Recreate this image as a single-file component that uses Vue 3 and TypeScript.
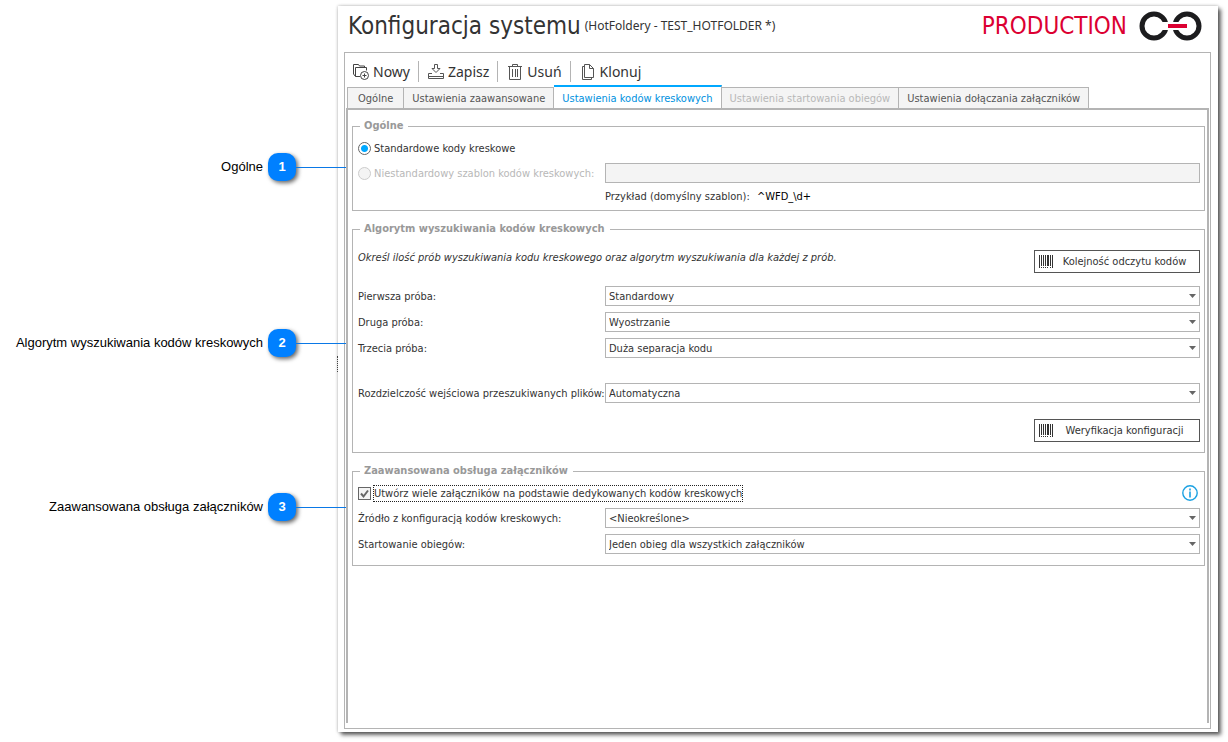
<script setup lang="ts">
import { ref } from 'vue'

interface Callout { id: number; label: string }
interface Tab { label: string; disabled?: boolean }
interface Attempt { id: string; label: string; value: string }

const callouts: Callout[] = [
  { id: 1, label: 'Ogólne' },
  { id: 2, label: 'Algorytm wyszukiwania kodów kreskowych' },
  { id: 3, label: 'Zaawansowana obsługa załączników' },
]

const tabs: Tab[] = [
  { label: 'Ogólne' },
  { label: 'Ustawienia zaawansowane' },
  { label: 'Ustawienia kodów kreskowych' },
  { label: 'Ustawienia startowania obiegów', disabled: true },
  { label: 'Ustawienia dołączania załączników' },
]
const activeTab = ref(2)

const algorithms: string[] = ['Standardowy', 'Wyostrzanie', 'Duża separacja kodu']
const attempts = ref<Attempt[]>([
  { id: 'first', label: 'Pierwsza próba:', value: 'Standardowy' },
  { id: 'second', label: 'Druga próba:', value: 'Wyostrzanie' },
  { id: 'third', label: 'Trzecia próba:', value: 'Duża separacja kodu' },
])

const mode = ref('standard')
const multiple = ref(true)
</script>

<template>
  <div class="page">
    <aside class="callouts">
      <div v-for="c in callouts" :key="c.id" class="callout">
        <span class="callout-label">{{ c.label }}</span>
        <span class="badge">{{ c.id }}</span>
        <span class="lead"></span>
      </div>
    </aside>

    <main class="window">
      <span class="grip"></span>
      <header class="head">
        <h1>Konfiguracja systemu</h1>
        <span class="sub">(HotFoldery - TEST_HOTFOLDER *)</span>
        <span class="env">PRODUCTION</span>
        <svg class="logo" width="64" height="30" viewBox="0 0 64 30">
          <circle cx="15" cy="15" r="12" fill="none" stroke="#1c1c1e" stroke-width="5" />
          <circle cx="48" cy="15" r="12" fill="none" stroke="#1c1c1e" stroke-width="5" />
          <path d="M22 11h19v8H22z" fill="#fff" />
          <path d="M30 0h3v30h-3z" fill="#fff" />
          <path d="M29 13h19v4H29z" fill="#dc0032" />
        </svg>
      </header>

      <div class="panel">
        <nav class="toolbar">
          <button type="button" class="tool">
            <svg width="18" height="18" viewBox="0 0 18 18" fill="none" stroke="#444">
              <path d="M8 13.500H3.500V4.500h11V7.500M3.500 13.500l-2-2.500V1.500h5l1 1.500h5v1.500" />
              <circle cx="12.500" cy="12.500" r="4" />
              <path d="M10.500 12.500h4M12.500 10.500v4" />
            </svg>
            Nowy
          </button>
          <button type="button" class="tool">
            <svg width="18" height="18" viewBox="0 0 18 18" fill="none" stroke="#555">
              <path d="M7.500 1.500h3v4h2.500L9 9.500 5 5.500h2.500zM5 10.500H1.500v5h15v-5H13M1.500 13.500h15" />
            </svg>
            Zapisz
          </button>
          <button type="button" class="tool">
            <svg width="18" height="18" viewBox="0 0 18 18" fill="none" stroke="#555">
              <path d="M2 3.500h14M6.500 3V1.500h5V3M3.500 3.500v13h11v-13M6.500 6v8M9.500 6v8M11.500 6v8" />
            </svg>
            Usuń
          </button>
          <button type="button" class="tool">
            <svg width="18" height="18" viewBox="0 0 18 18" fill="none" stroke="#555">
              <path d="M5.500 1.500h5l4 4v9h-9zM10.500 1.500v4h4M5.500 3.500h-2v13h9v-2" />
            </svg>
            Klonuj
          </button>
        </nav>

        <div class="tabs" role="tablist">
          <button
            v-for="(t, i) in tabs"
            :key="t.label"
            type="button"
            role="tab"
            class="tab"
            :class="{ active: i === activeTab }"
            :aria-selected="i === activeTab"
            :disabled="t.disabled"
            @click="activeTab = i"
          >{{ t.label }}</button>
        </div>

        <div class="sheet">
          <fieldset class="general">
            <legend>Ogólne</legend>
            <label class="choice">
              <input v-model="mode" type="radio" name="mode" value="standard">
              <span class="choice-text">Standardowe kody kreskowe</span>
            </label>
            <div class="row">
              <label class="choice off">
                <input v-model="mode" type="radio" name="mode" value="custom" disabled>
                <span class="choice-text">Niestandardowy szablon kodów kreskowych:</span>
              </label>
              <input class="box" type="text" aria-label="Niestandardowy szablon kodów kreskowych" disabled>
            </div>
            <div class="row">
              <span></span>
              <p class="example">Przykład (domyślny szablon): <span class="pattern">^WFD_\d+</span></p>
            </div>
          </fieldset>

          <fieldset class="search">
            <legend>Algorytm wyszukiwania kodów kreskowych</legend>
            <div class="intro">
              <p class="hint">Określ ilość prób wyszukiwania kodu kreskowego oraz algorytm wyszukiwania dla każdej z prób.</p>
              <button type="button" class="action">
                <svg width="15" height="13" viewBox="0 0 15 13" fill="#333">
                  <path d="M0 0h1v13H0zM2 0h1v11H2zM4 0h1v11H4zM6 0h1v11H6zM8 0h2v11H8zM11 0h1v11h-1zM13 0h1v13h-1zM2 12h1v1H2zM4 12h1v1H4zM6 12h1v1H6zM8 12h1v1H8zM11 12h1v1h-1z" />
                </svg>
                <span>Kolejność odczytu kodów</span>
              </button>
            </div>
            <div v-for="a in attempts" :key="a.id" class="row">
              <label :for="a.id">{{ a.label }}</label>
              <div class="select">
                <select :id="a.id" v-model="a.value">
                  <option v-for="o in algorithms" :key="o">{{ o }}</option>
                </select>
                <svg width="7" height="4" viewBox="0 0 7 4"><path d="M0 0h7L3.500 4z" fill="#666" /></svg>
              </div>
            </div>
            <div class="row apart">
              <label for="resolution">Rozdzielczość wejściowa przeszukiwanych plików:</label>
              <div class="select">
                <select id="resolution"><option>Automatyczna</option></select>
                <svg width="7" height="4" viewBox="0 0 7 4"><path d="M0 0h7L3.500 4z" fill="#666" /></svg>
              </div>
            </div>
            <div class="verify">
              <button type="button" class="action">
                <svg width="15" height="13" viewBox="0 0 15 13" fill="#333">
                  <path d="M0 0h1v13H0zM2 0h1v11H2zM4 0h1v11H4zM6 0h1v11H6zM8 0h2v11H8zM11 0h1v11h-1zM13 0h1v13h-1zM2 12h1v1H2zM4 12h1v1H4zM6 12h1v1H6zM8 12h1v1H8zM11 12h1v1h-1z" />
                </svg>
                <span>Weryfikacja konfiguracji</span>
              </button>
            </div>
          </fieldset>

          <fieldset class="advanced">
            <legend>Zaawansowana obsługa załączników</legend>
            <div class="multi">
              <label class="choice">
                <input v-model="multiple" type="checkbox">
                <span class="choice-text focus">Utwórz wiele załączników na podstawie dedykowanych kodów kreskowych</span>
              </label>
              <svg width="16" height="16" viewBox="0 0 16 16" fill="none" stroke="#1ba1e2">
                <circle cx="8" cy="8" r="7.200" stroke-width="1.400" />
                <path d="M8 3.500v2M8 6.500v6" stroke-width="1.600" />
              </svg>
            </div>
            <div class="row">
              <label for="source">Źródło z konfiguracją kodów kreskowych:</label>
              <div class="select">
                <select id="source"><option>&lt;Nieokreślone&gt;</option></select>
                <svg width="7" height="4" viewBox="0 0 7 4"><path d="M0 0h7L3.500 4z" fill="#666" /></svg>
              </div>
            </div>
            <div class="row">
              <label for="start">Startowanie obiegów:</label>
              <div class="select">
                <select id="start"><option>Jeden obieg dla wszystkich załączników</option></select>
                <svg width="7" height="4" viewBox="0 0 7 4"><path d="M0 0h7L3.500 4z" fill="#666" /></svg>
              </div>
            </div>
          </fieldset>
        </div>
      </div>
    </main>
  </div>
</template>

<style>
body {
  background: #fff;
}
</style>

<style scoped>
* {
  box-sizing: border-box;
}
.page {
  display: flex;
  min-height: 100vh;
  padding: 6px 10px 10px 0;
  font: 11px/14px "DejaVu Sans Condensed", "Noto Sans", sans-serif;
  color: #333;
}
.callouts {
  display: flex;
  flex: none;
  flex-direction: column;
  gap: 136px;
  width: 338px;
  padding-top: 147px;
  z-index: 1;
  pointer-events: none;
}
.callout {
  display: flex;
  align-items: center;
  justify-content: flex-end;
  margin-right: -8px;
  font: 13px/28px "Liberation Sans", Arial, sans-serif;
  color: #000;
}
.callout:first-child {
  margin-bottom: 12px;
}
.badge {
  width: 28px;
  height: 28px;
  margin-left: 5px;
  border-radius: 10px;
  background: #0080ff;
  box-shadow: 2px 2px 4px rgba(0, 0, 0, 0.6);
  color: #fff;
  font-weight: bold;
  text-align: center;
}
.lead {
  width: 50px;
  height: 1px;
  background: #0a78e6;
}
.window {
  position: relative;
  display: flex;
  flex: 1;
  flex-direction: column;
  min-width: 0;
  padding: 0 7px 3px 6px;
  background: #fff;
  box-shadow: 3px 3px 4px rgba(0, 0, 0, 0.6), 0 0 3px rgba(0, 0, 0, 0.3);
}
.grip {
  position: absolute;
  left: -1px;
  top: 350px;
  height: 16px;
  border-left: 1px dotted #444;
}
.head {
  display: flex;
  align-items: center;
  height: 46px;
  padding: 0 8px 7px 4px;
  white-space: nowrap;
}
h1 {
  margin: 0 4px 0 0;
  font-size: 24px;
  line-height: 30px;
  font-weight: normal;
}
.sub {
  font-family: "Noto Sans", sans-serif;
  font-size: 12px;
}
.env {
  margin: 0 12px 0 auto;
  color: #dc0032;
  font-size: 24px;
  line-height: 30px;
}
.panel {
  display: flex;
  flex: 1;
  flex-direction: column;
  padding: 0 1px 5px;
  border: 1px solid #b4b4b4;
}
.toolbar {
  display: flex;
  align-items: center;
  height: 32px;
  padding: 5px 0 0;
}
.tool {
  display: flex;
  align-items: center;
  gap: 3px;
  height: 21px;
  padding: 0 8px;
  border: 0;
  border-right: 1px solid #b4b4b4;
  background: none;
  color: #333;
  font: 14px/20px "Noto Sans", sans-serif;
}
.tool:first-child {
  padding-left: 6px;
}
.tool:last-child {
  border-right: 0;
}
.tabs {
  display: flex;
  align-items: flex-end;
  height: 23px;
  padding-left: 1px;
}
.tab {
  height: 21px;
  padding: 2px 8px 0;
  border: 1px solid #b4b4b4;
  border-bottom: 0;
  border-left-width: 0;
  background: #f4f4f4;
  color: #555;
  font: inherit;
  white-space: nowrap;
}
.tab:first-child {
  padding: 2px 10px 0;
  border-left-width: 1px;
}
.tab:disabled {
  color: #b8b8b8;
}
.tab.active {
  height: 23px;
  border-top: 2px solid #00a8ff;
  background: #fff;
  color: #0091e0;
}
.sheet {
  display: flex;
  flex: 1;
  flex-direction: column;
  gap: 11px;
  padding: 9px 2px 0 4px;
  border: 2px solid #b4b4b4;
  border-bottom: 0;
}
fieldset {
  display: flex;
  flex-direction: column;
  gap: 6px;
  min-width: 0;
  margin: 0;
  border: 1px solid #b4b4b4;
}
legend {
  margin-left: 2px;
  padding: 0 5px 2px 4px;
  color: #999;
  font-weight: bold;
  line-height: 13px;
}
p {
  margin: 0;
}
.general {
  padding: 5px 4px 7px 5px;
}
.search {
  padding: 13px 4px 10px 5px;
}
.advanced {
  padding: 5px 4px 11px 5px;
}
.row {
  display: grid;
  grid-template-columns: 247px 1fr;
  align-items: center;
  white-space: nowrap;
}
.row > label:not(.choice) {
  padding-top: 2px;
}
.choice {
  display: flex;
  align-items: center;
  gap: 3px;
  min-height: 18px;
}
.choice-text {
  padding-top: 1px;
}
.off {
  color: #b8b8b8;
}
input[type="radio"],
input[type="checkbox"] {
  flex: none;
  width: 13px;
  height: 13px;
  margin: 0;
  appearance: none;
  border: 1px solid #666;
  background: #fff;
}
input[type="radio"] {
  border-radius: 50%;
}
input[type="radio"]:checked {
  background: radial-gradient(circle, #00a8ff 3px, #fff 4px);
}
input[type="radio"]:disabled {
  border-color: #ccc;
  background: #f4f4f4;
}
input[type="checkbox"]:checked {
  background: url("data:image/svg+xml,%3Csvg xmlns='http://www.w3.org/2000/svg' viewBox='0 0 11 11'%3E%3Cpath d='M2 5.500l2.500 3L9 2.500' fill='none' stroke='%23666' stroke-width='2'/%3E%3C/svg%3E") #f4f4f4;
}
.box {
  width: 100%;
  height: 20px;
  border: 1px solid #b4b4b4;
  background: #f4f4f4;
}
.example {
  height: 14px;
  line-height: 16px;
}
.pattern {
  margin-left: 4px;
  color: #000;
}
.intro {
  display: flex;
  justify-content: space-between;
  margin-bottom: 7px;
}
.hint {
  font-style: italic;
  line-height: 16px;
  white-space: nowrap;
}
.action {
  display: flex;
  flex: none;
  align-items: center;
  width: 166px;
  height: 23px;
  padding: 0 4px;
  border: 1px solid #555;
  background: #fff;
  color: #333;
  font: inherit;
}
.action span {
  flex: 1;
  padding-top: 1px;
}
.select {
  position: relative;
}
.select svg {
  position: absolute;
  right: 4px;
  top: 8px;
  pointer-events: none;
}
select {
  display: block;
  width: 100%;
  height: 20px;
  padding: 2px 16px 0 3px;
  appearance: none;
  border: 1px solid #b4b4b4;
  border-radius: 0;
  background: #fff;
  color: #333;
  font: inherit;
}
.apart {
  margin-top: 19px;
}
.verify {
  display: flex;
  justify-content: flex-end;
  margin-top: 10px;
}
.multi {
  display: flex;
  align-items: center;
  justify-content: space-between;
  padding-right: 2px;
}
.focus {
  outline: 1px dotted #222;
}
</style>
